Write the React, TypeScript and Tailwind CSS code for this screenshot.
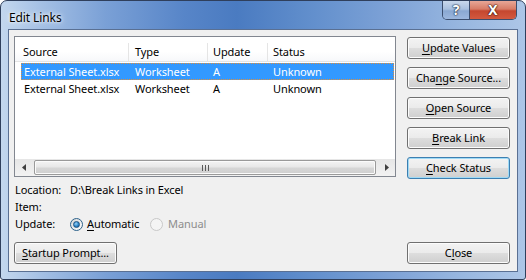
import React from "react";

const font = "font-['Segoe_UI','Noto_Sans',sans-serif]";

const Btn = ({ children, focused }: { children: React.ReactNode; focused?: boolean }) => (
    <div
        className={
            "h-[22px] w-[103px] shrink-0 rounded-[3px] border flex items-center justify-center text-[11px] text-black bg-[linear-gradient(#f3f3f3_0%,#ebebeb_48%,#dddddd_52%,#cfcfcf_100%)] " +
            (focused
                ? "border-[#3c7fb1] shadow-[inset_0_0_0_1px_#9fdaf6]"
                : "border-[#707070] shadow-[inset_0_0_0_1px_#fcfcfc]")
        }
    >
        <span>{children}</span>
    </div>
);

const U = ({ children }: { children: React.ReactNode }) => (
    <span className="underline underline-offset-[2px] decoration-[1px]">{children}</span>
);

const Radio = ({ checked, disabled }: { checked?: boolean; disabled?: boolean }) => (
    <div
        className={
            "w-[13px] h-[13px] rounded-full border flex items-center justify-center " +
            (disabled
                ? "border-[#c8c8c8] bg-[#f4f4f4]"
                : "border-[#2c628b] bg-[linear-gradient(135deg,#d6d6d6,#ffffff)]")
        }
    >
        {checked && (
            <div className="w-[7px] h-[7px] rounded-full bg-[radial-gradient(circle_at_40%_35%,#9ad2f7_0%,#2d86c8_55%,#0e4f8a_100%)] border border-[#1c5180]" />
        )}
    </div>
);

const Row = ({ selected }: { selected?: boolean }) => (
    <div
        className={
            "h-[17px] flex items-center pt-[1px] border " +
            (selected ? "bg-[#3399ff] text-white border-dotted border-[#e08f3c]" : "border-transparent")
        }
    >
        <div className="w-[107px] pl-[2px]">External Sheet.xlsx</div>
        <div className="w-[79px] pl-[6px]">Worksheet</div>
        <div className="w-[60px] pl-[5px]">A</div>
        <div className="flex-1 pl-[5px]">Unknown</div>
    </div>
);

export default function App() {
    return (
        <div className={"w-[526px] h-[280px] bg-white tracking-[-0.1px] " + font}>
            <div className="w-[526px] h-[280px] flex flex-col rounded-t-[7px] rounded-b-[3px] border border-[#2f3f5c] px-[7px] pb-[7px] bg-[linear-gradient(90deg,#c3d7ee_0%,#a3bfe4_8%,#7aa0d6_20%,#5785c8_35%,#4a7bc1_45%,#6390cd_60%,#7fa3d7_75%,#98b7e0_88%,#adc6e7_100%)]">
                {/* title bar */}
                <div className="h-[28px] flex items-start shrink-0">
                    <span className="mt-[8px] ml-[1px] text-[12px] text-black [text-shadow:0_0_6px_#ffffff,0_0_3px_#ffffff]">
                        Edit Links
                    </span>
                    <div className="ml-auto mr-[1px] flex h-[19px] border border-t-0 border-[#3b4e6e] rounded-b-[5px] overflow-hidden">
                        <div className="w-[27px] h-full flex items-center justify-center border-r border-[#3b4e6e] bg-[linear-gradient(#c9d8ec_0%,#a9c0df_45%,#8aa8d2_55%,#9cb7de_100%)]">
                            <span className="text-[14px] font-bold leading-none text-white [text-shadow:0_0_1px_#1d2b44,0_0_1px_#1d2b44,0_0_2px_#1d2b44]">?</span>
                        </div>
                        <div className="w-[46px] h-full flex items-center justify-center bg-[linear-gradient(#e8a797_0%,#d77b66_45%,#c5472f_55%,#d3593f_100%)]">
                            <span className="text-[14px] font-bold leading-none text-white [text-shadow:0_0_1px_#3b1208,0_0_1px_#3b1208,0_0_2px_#3b1208]">X</span>
                        </div>
                    </div>
                </div>

                {/* client area */}
                <div className="flex-1 flex flex-col bg-[#f0f0f0] border border-[#5a7093] pl-[5px] pr-[7px] pt-[6px] pb-[7px] text-[11px] text-black">
                    <div className="flex gap-[11px]">
                        {/* list view */}
                        <div className="w-[382px] h-[141px] border border-[#828790] bg-white flex flex-col">
                            <div className="h-[25px] flex items-stretch shrink-0 pt-[6px] bg-[linear-gradient(#ffffff_0%,#ffffff_60%,#f7f8fa_100%)] border-b border-[#e5e5e5]">
                                <div className="w-[114px] border-r border-[#e5e5e5] pl-[8px] flex items-center">Source</div>
                                <div className="w-[79px] border-r border-[#e5e5e5] pl-[6px] flex items-center">Type</div>
                                <div className="w-[60px] border-r border-[#e5e5e5] pl-[5px] flex items-center">Update</div>
                                <div className="flex-1 pl-[5px] flex items-center">Status</div>
                            </div>
                            <div className="mt-[1px] ml-[6px] mr-[1px] flex flex-col">
                                <Row selected />
                                <Row />
                            </div>
                            {/* horizontal scrollbar */}
                            <div className="mt-auto h-[17px] flex items-stretch bg-[linear-gradient(#e6e6e6,#f2f2f2)]">
                                <div className="w-[17px] flex items-center justify-center">
                                    <svg width="4" height="7" viewBox="0 0 4 7">
                                        <path d="M4 0 L0 3.5 L4 7 Z" fill="#404040" />
                                    </svg>
                                </div>
                                <div className="flex-1 flex items-stretch py-[1px] px-[2px]">
                                    <div className="flex-1 rounded-[2px] border border-[#9a9a9a] bg-[linear-gradient(#f4f4f4_0%,#e8e8e8_45%,#d6d6d6_55%,#cfcfcf_100%)] flex items-center justify-center shadow-[inset_0_0_0_1px_#fbfbfb]">
                                        <div className="flex gap-[2px]">
                                            <div className="w-[1px] h-[6px] bg-[#5a5a5a]" />
                                            <div className="w-[1px] h-[6px] bg-[#5a5a5a]" />
                                            <div className="w-[1px] h-[6px] bg-[#5a5a5a]" />
                                        </div>
                                    </div>
                                </div>
                                <div className="w-[17px] flex items-center justify-center">
                                    <svg width="4" height="7" viewBox="0 0 4 7">
                                        <path d="M0 0 L4 3.5 L0 7 Z" fill="#404040" />
                                    </svg>
                                </div>
                            </div>
                        </div>

                        {/* right buttons */}
                        <div className="mt-[1px] flex flex-col gap-[8px]">
                            <Btn><U>U</U>pdate Values</Btn>
                            <Btn>Cha<U>n</U>ge Source...</Btn>
                            <Btn><U>O</U>pen Source</Btn>
                            <Btn><U>B</U>reak Link</Btn>
                            <Btn focused><U>C</U>heck Status</Btn>
                        </div>
                    </div>

                    {/* info */}
                    <div className="mt-[3px] ml-[1px] flex flex-col">
                        <div className="h-[17px] flex items-center">
                            <span className="w-[55px]">Location:</span>
                            <span>D:\Break Links in Excel</span>
                        </div>
                        <div className="h-[17px] flex items-center">
                            <span className="w-[55px]">Item:</span>
                        </div>
                        <div className="h-[17px] flex items-center">
                            <span className="w-[55px]">Update:</span>
                            <Radio checked />
                            <span className="ml-[4px]"><U>A</U>utomatic</span>
                            <span className="ml-[11px]"><Radio disabled /></span>
                            <span className="ml-[5px] text-[#8d8d8d]">Manual</span>
                        </div>
                    </div>

                    <div className="mt-auto flex justify-between">
                        <Btn><U>S</U>tartup Prompt...</Btn>
                        <Btn>C<U>l</U>ose</Btn>
                    </div>
                </div>
            </div>
        </div>
    );
}
